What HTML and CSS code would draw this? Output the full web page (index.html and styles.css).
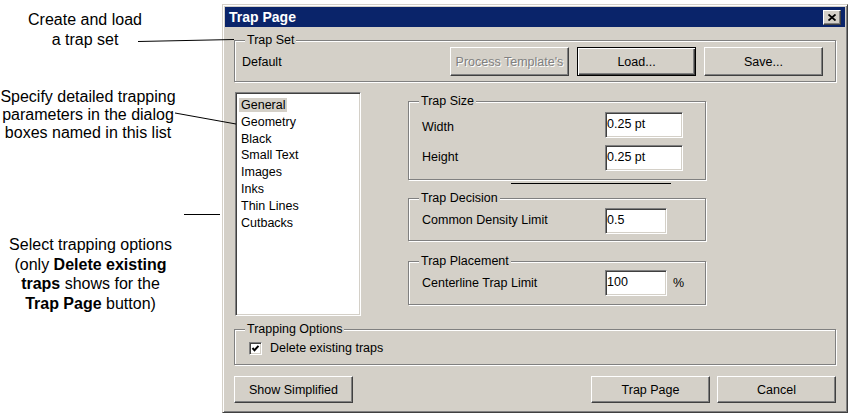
FILE: index.html
```html
<!DOCTYPE html>
<html lang="en">
<head>
  <meta charset="UTF-8">
  <meta name="viewport" content="width=device-width, initial-scale=1.0">
  <title>Trap Page</title>
  <link rel="stylesheet" href="styles.css">
</head>
<body>
  <div class="page">
    <div class="notes">
      <p class="note note-set">Create and load<br>a trap set</p>
      <p class="note note-list">Specify detailed trapping<br>parameters in the dialog<br>boxes named in this list</p>
      <p class="note note-options">Select trapping options<br>(only <b>Delete existing</b><br><b>traps</b> shows for the<br><b>Trap Page</b> button)</p>
    </div>

    <div class="dialog">
      <div class="titlebar">
        <span class="title">Trap Page</span>
        <button class="close-btn" aria-label="Close">
          <svg width="8" height="7" viewBox="0 0 8 7">
            <path d="M0.5 0.5 L7.5 6.5 M7.5 0.5 L0.5 6.5" stroke="#000" stroke-width="1.8" fill="none"/>
          </svg>
        </button>
      </div>

      <div class="dialog-body">
        <fieldset class="group group-set">
          <legend>Trap Set</legend>
          <div class="set-row">
            <span class="set-name">Default</span>
            <button class="btn" disabled>Process Template's</button>
            <button class="btn btn-default">Load...</button>
            <button class="btn">Save...</button>
          </div>
        </fieldset>

        <div class="middle">
          <ul class="listbox">
            <li><span class="item selected">General</span></li>
            <li><span class="item">Geometry</span></li>
            <li><span class="item">Black</span></li>
            <li><span class="item">Small Text</span></li>
            <li><span class="item">Images</span></li>
            <li><span class="item">Inks</span></li>
            <li><span class="item">Thin Lines</span></li>
            <li><span class="item">Cutbacks</span></li>
          </ul>

          <div class="groups">
            <fieldset class="group group-size">
              <legend>Trap Size</legend>
              <div class="field">
                <span class="field-label low">Width</span>
                <input class="text-input" type="text" value="0.25 pt">
              </div>
              <div class="field">
                <span class="field-label high">Height</span>
                <input class="text-input" type="text" value="0.25 pt">
              </div>
            </fieldset>

            <fieldset class="group group-decision">
              <legend>Trap Decision</legend>
              <div class="field">
                <span class="field-label high">Common Density Limit</span>
                <input class="text-input short" type="text" value="0.5">
              </div>
            </fieldset>

            <fieldset class="group group-placement">
              <legend>Trap Placement</legend>
              <div class="field">
                <span class="field-label">Centerline Trap Limit</span>
                <input class="text-input short" type="text" value="100">
                <span class="unit">%</span>
              </div>
            </fieldset>
          </div>
        </div>

        <fieldset class="group group-options">
          <legend>Trapping Options</legend>
          <label class="check-row">
            <span class="checkbox">
              <svg width="9" height="9" viewBox="0 0 9 9">
                <polyline points="1.5,4 3.5,6.3 7.5,1.8" stroke="#000" stroke-width="2" fill="none"/>
              </svg>
            </span>
            <span class="check-label">Delete existing traps</span>
          </label>
        </fieldset>

        <div class="footer">
          <button class="btn btn-small">Show Simplified</button>
          <span class="spacer"></span>
          <button class="btn btn-small">Trap Page</button>
          <button class="btn btn-small">Cancel</button>
        </div>
      </div>
    </div>
  </div>

  <!-- leader lines from the notes to the dialog -->
  <svg class="leaders" width="849" height="416" viewBox="0 0 849 416">
    <line x1="138" y1="41.5" x2="234" y2="39.5" stroke="#000" stroke-width="1"/>
    <line x1="175" y1="113" x2="236" y2="124" stroke="#000" stroke-width="1"/>
    <line x1="184" y1="214.5" x2="220" y2="214.5" stroke="#000" stroke-width="1" shape-rendering="crispEdges"/>
    <line x1="511" y1="183.5" x2="671" y2="183.5" stroke="#000" stroke-width="1" shape-rendering="crispEdges"/>
  </svg>
</body>
</html>
```

FILE: styles.css
```css
* {
  box-sizing: border-box;
}

body {
  margin: 0;
  background-color: #fff;
  font-family: "Liberation Sans", Arial, Helvetica, sans-serif;
  color: #000;
}

.page {
  display: flex;
  align-items: flex-start;
  width: 849px;
  height: 416px;
  overflow: hidden;
}

/* annotations on the left */
.notes {
  flex: none;
  width: 222px;
  padding-top: 10px;
  font-size: 16px;
}

.note {
  margin: 0;
  text-align: center;
  white-space: nowrap;
}

.note-set {
  width: 170px;
  line-height: 20px;
}

.note-list {
  width: 176px;
  line-height: 18px;
  margin-top: 38px;
}

.note-options {
  width: 181px;
  line-height: 19.5px;
  margin-top: 93px;
}

.leaders {
  position: absolute;
  top: 0;
  left: 0;
  pointer-events: none;
}

/* dialog window */
.dialog {
  flex: none;
  display: flex;
  flex-direction: column;
  width: 626px;
  height: 409px;
  margin-top: 4px;
  padding: 2px;
  background-color: #d4d0c8;
  border: 1px solid;
  border-color: #d4d0c8 #404040 #404040 #d4d0c8;
  box-shadow: inset 1px 1px #fff, inset -1px -1px #808080;
  font-size: 12.5px;
}

.titlebar {
  flex: none;
  display: flex;
  align-items: center;
  justify-content: space-between;
  height: 20px;
  padding: 0 4px;
  background-color: #0a246a;
}

.title {
  color: #fff;
  font-weight: bold;
  font-size: 14px;
}

.close-btn {
  display: flex;
  align-items: center;
  justify-content: center;
  width: 18px;
  height: 15px;
  padding: 0;
  background-color: #d4d0c8;
  border: 1px solid;
  border-color: #fff #404040 #404040 #fff;
  box-shadow: inset -1px -1px #808080;
}

.dialog-body {
  padding: 6px 9px 0;
}

/* group boxes */
.group {
  margin: 0;
  min-width: 0;
  border: 1px solid #808080;
  box-shadow: inset 1px 1px #fff, 1px 1px #fff;
}

.group legend {
  padding: 0 2px;
  line-height: 14px;
  background-color: #d4d0c8;
}

.group-set {
  padding: 0 12px 5px 7px;
}

.group-set legend {
  margin-left: 3px;
}

.set-row {
  display: flex;
  align-items: center;
  gap: 8px;
}

.set-name {
  flex: 1;
}

/* buttons */
.btn {
  width: 119px;
  height: 29px;
  padding: 0;
  font-family: "Liberation Sans", Arial, Helvetica, sans-serif;
  font-size: 12.5px;
  color: #000;
  background-color: #d4d0c8;
  border: 1px solid;
  border-color: #fff #404040 #404040 #fff;
  box-shadow: inset -1px -1px #808080;
}

.btn-default {
  border-color: #000;
  box-shadow: inset 1px 1px #fff, inset -1px -1px #404040, inset -2px -2px #808080;
}

.btn:disabled {
  color: #808080;
  text-shadow: 1px 1px #fff;
}

.btn-small {
  height: 27px;
}

/* list and settings */
.middle {
  display: flex;
  align-items: flex-start;
  margin-top: 10px;
  padding-left: 1px;
}

.listbox {
  flex: none;
  width: 126px;
  height: 224px;
  margin: 0;
  padding: 4px 0 0 3px;
  list-style: none;
  background-color: #fff;
  border: 1px solid;
  border-color: #808080 #fff #fff #808080;
  box-shadow: inset 1px 1px #404040, inset -1px -1px #d4d0c8;
  line-height: 16.8px;
}

.item {
  padding: 0 2px;
}

.item.selected {
  background-color: #d4d0c8;
}

.groups {
  width: 298px;
  margin-left: 47px;
  margin-top: 2px;
}

.group-size {
  padding: 4px 0 8px 13px;
}

.group-decision {
  margin-top: 11px;
  padding: 3px 0 6px 13px;
}

.group-placement {
  margin-top: 13px;
  padding: 2px 0 8px 13px;
}

.group-size legend,
.group-decision legend,
.group-placement legend {
  margin-left: -3px;
}

.field {
  display: grid;
  grid-template-columns: 183px auto auto;
  justify-content: start;
  align-items: center;
}

.field + .field {
  margin-top: 7px;
}

.field-label.low {
  padding-top: 4px;
}

.field-label.high {
  padding-bottom: 3px;
}

.text-input {
  width: 78px;
  height: 26px;
  padding: 0 0 3px 1px;
  font-family: "Liberation Sans", Arial, Helvetica, sans-serif;
  font-size: 12.5px;
  color: #000;
  background-color: #fff;
  border: 1px solid;
  border-color: #808080 #fff #fff #808080;
  box-shadow: inset 1px 1px #404040, inset -1px -1px #d4d0c8;
  outline: none;
}

.text-input.short {
  width: 62px;
}

.unit {
  margin-left: 6px;
}

/* trapping options */
.group-options {
  margin-top: 6px;
  padding: 6px 0 9px 14px;
}

.group-options legend {
  margin-left: -4px;
}

.check-row {
  display: flex;
  align-items: center;
  gap: 8px;
  line-height: 13px;
}

.checkbox {
  display: flex;
  align-items: center;
  justify-content: center;
  width: 13px;
  height: 13px;
  background-color: #fff;
  border: 1px solid;
  border-color: #808080 #fff #fff #808080;
  box-shadow: inset 1px 1px #404040, inset -1px -1px #d4d0c8;
}

.footer {
  display: flex;
  gap: 7px;
  margin-top: 11px;
}

.spacer {
  flex: 1;
}
```
